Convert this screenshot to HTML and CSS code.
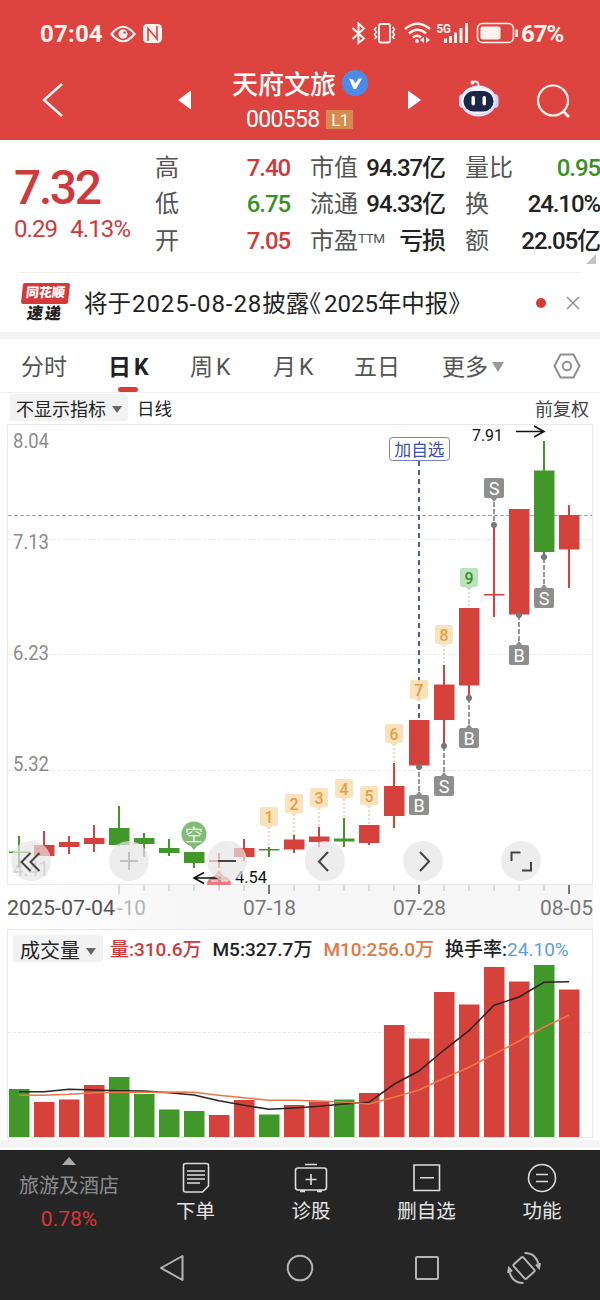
FILE: index.html
```html
<!DOCTYPE html>
<html lang="zh-CN">
<head>
  <meta charset="UTF-8">
  <meta name="viewport" content="width=device-width, initial-scale=1.0">
  <title>天府文旅 000558</title>
  <link rel="stylesheet" href="styles.css">
</head>
<body>
  <header class="header">
    <div class="status-bar">
      <span class="clock">07:04</span>
      <svg class="status-left" width="54" height="24" viewBox="0 0 54 24">
        <path d="M1.5 12Q13 -2.500 24.500 12Q13 26.500 1.500 12Z" fill="none" stroke="#fff3ee" stroke-width="2.200"/>
        <circle cx="13" cy="12" r="4.500" fill="#fff3ee"/>
        <circle cx="14.500" cy="10.500" r="1.200" fill="#dd4440"/>
        <rect x="33" y="2" width="19" height="19" rx="4.500" fill="#fff3ee"/>
        <path d="M38 19V6.500L47 17V4" fill="none" stroke="#dd4440" stroke-width="1.600"/>
      </svg>
      <svg class="status-right" width="170" height="24" viewBox="350 22 170 24">
        <g fill="none" stroke="#fff3ee" stroke-width="2">
          <path d="M352.500 28L364 38.500L358.500 43V23.500L364 28.500L352.500 39"/>
          <rect x="379" y="24" width="11" height="18.500" rx="2"/>
          <path d="M376.500 27l-2 2.500 2 2.500-2 2.500 2 2.500-2 2M392.500 27l2 2.500-2 2.500 2 2.500-2 2.500 2 2" stroke-width="1.600"/>
          <path d="M405 29Q417.500 18.500 430 29M409 33.500Q417.500 26 426 33.500M413 37.500Q417 34 421 37.500" stroke-width="2.400"/>
          <rect x="477.500" y="23.500" width="36" height="19" rx="5" stroke-width="1.600"/>
          <path d="M516.700 29.500v7.500" stroke-width="2.400"/>
        </g>
        <g fill="#fff3ee">
          <circle cx="417" cy="41" r="1.900"/>
          <path d="M420 40l4-3v6zM430 40l-4-3v6z"/>
          <path d="M444 38.500h3v4.500h-3zM449 36h3v7h-3zM454 32.500h3v10.500h-3zM459.500 28h3v15h-3zM465 23h3v20h-3z"/>
          <rect x="480.500" y="26.500" width="20" height="13" rx="2"/>
          <text x="436.500" y="33" class="net" textLength="14.500" lengthAdjust="spacingAndGlyphs">5G</text>
        </g>
      </svg>
      <span class="battery">67%</span>
    </div>
    <div class="title-bar">
      <svg class="back" width="24" height="38" viewBox="0 0 24 38"><path d="M21 3L3 19L21 35" fill="none" stroke="#fff" stroke-width="2.400"/></svg>
      <svg class="prev" width="14" height="20" viewBox="0 0 14 20"><path d="M0 10L13 0.500V19.500Z" fill="#fff"/></svg>
      <div class="stock">
        <div class="stock-name">天府文旅
          <svg width="26" height="26" viewBox="0 0 26 26"><circle cx="13" cy="13" r="13" fill="#4e8be8"/><path d="M7 8.500l4 1 2.500 4 3-5h3.500l-6 10.500h-2.500z" fill="#fff"/></svg>
        </div>
        <div class="stock-code">000558<span class="level">L1</span></div>
      </div>
      <svg class="next" width="14" height="20" viewBox="0 0 14 20"><path d="M13 10L0 0.500V19.500Z" fill="#fff"/></svg>
      <svg class="robot" width="42" height="40" viewBox="0 0 42 40">
        <path d="M14 3.500Q21 0 20.500 8" fill="none" stroke="#f6e3e8" stroke-width="2"/>
        <circle cx="14.500" cy="3.500" r="2" fill="#fff"/>
        <rect x="1" y="15" width="8" height="14" rx="4" fill="#cfd0fa"/>
        <rect x="32.500" y="15" width="8" height="14" rx="4" fill="#cfd0fa"/>
        <ellipse cx="20.500" cy="22" rx="18" ry="15.500" fill="#dcdcff"/>
        <ellipse cx="20" cy="21" rx="16.500" ry="14" fill="#f4f3ff"/>
        <rect x="5.500" y="12" width="30" height="20.500" rx="10" fill="#1c2748"/>
        <rect x="13.500" y="17" width="3.500" height="9.500" rx="1.700" fill="#fff"/>
        <rect x="24.500" y="17" width="3.500" height="9.500" rx="1.700" fill="#fff"/>
      </svg>
      <svg class="search" width="36" height="36" viewBox="0 0 36 36"><g fill="none" stroke="#fff3ee" stroke-width="2.200"><circle cx="17" cy="17.500" r="15"/><path d="M27 28l6 6" stroke-width="2.800"/></g></svg>
    </div>
  </header>

  <section class="quote">
    <div class="price red">
      <div class="last">7.32</div>
      <div class="change"><span>0.29</span><span>4.13%</span></div>
    </div>
    <dl class="col col-a">
      <dt>高</dt><dd class="red">7.40</dd>
      <dt>低</dt><dd class="green">6.75</dd>
      <dt>开</dt><dd class="red">7.05</dd>
    </dl>
    <dl class="col col-b">
      <dt>市值</dt><dd>94.37亿</dd>
      <dt>流通</dt><dd>94.33亿</dd>
      <dt>市盈<sup>TTM</sup></dt><dd>亏损</dd>
    </dl>
    <dl class="col col-c">
      <dt>量比</dt><dd class="green">0.95</dd>
      <dt>换</dt><dd>24.10%</dd>
      <dt>额</dt><dd>22.05亿</dd>
    </dl>
    <span class="corner"></span>
  </section>

  <section class="notice">
    <div class="notice-logo"><span class="logo-top">同花顺</span><span class="logo-bottom">速递</span></div>
    <p class="notice-text">将于<span class="date">2025-08-28</span>披露《<span class="year">2025</span>年中报》</p>
    <span class="dot"></span>
    <svg width="14" height="14" viewBox="0 0 14 14"><path d="M1 1l12 12M13 1L1 13" stroke="#8c8c8c" stroke-width="1.400"/></svg>
  </section>

  <nav class="tabs">
    <a>分时</a>
    <a class="active">日<span>K</span></a>
    <a>周<span>K</span></a>
    <a>月<span>K</span></a>
    <a>五日</a>
    <a class="more">更多<i class="caret"></i></a>
    <svg width="28" height="26" viewBox="0 0 28 26"><g fill="none" stroke="#8f8f8f" stroke-width="2"><path d="M7.500 1.500h13l6 11.500-6 11.500h-13L1.500 13z" stroke-linejoin="round"/><circle cx="14" cy="13" r="4.200"/></g></svg>
  </nav>

  <div class="chart-bar">
    <button class="picker">不显示指标<i class="caret dark"></i></button>
    <span class="period">日线</span>
    <span class="adjust">前复权</span>
  </div>

  <section class="chart">
    <svg id="kline" width="600" height="505" viewBox="0 424 600 505"></svg>
    <div class="controls">
      <button><svg width="40" height="40"><path d="M19.500 12l-9 9 9 9M28.500 12l-9 9 9 9"/></svg></button>
      <button class="faint"><svg width="40" height="40"><path d="M11 20h18M20 11v18"/></svg></button>
      <button><svg width="40" height="40"><path d="M11 20h18"/></svg></button>
      <button><svg width="40" height="40"><path d="M23 11l-9 9.500 9 9.500"/></svg></button>
      <button><svg width="40" height="40"><path d="M17 11l9 9.500-9 9.500"/></svg></button>
      <button><svg width="40" height="40"><path d="M10.500 20v-8.500h9M30 21v8.500h-9"/></svg></button>
    </div>
  </section>

  <section class="volume">
    <div class="volume-head">
      <button class="picker">成交量<i class="caret dark"></i></button>
      <span class="red">量:310.6万</span>
      <span>M5:327.7万</span>
      <span class="orange">M10:256.0万</span>
      <span>换手率:<b>24.10%</b></span>
    </div>
    <svg id="volume" width="600" height="174" viewBox="0 964 600 174"></svg>
    <div class="divider"></div>
  </section>

  <footer class="bottom">
    <div class="actions">
      <a class="sector"><i class="up"></i><span class="sector-name">旅游及酒店</span><span class="sector-rate">0.78%</span></a>
      <a>
        <svg width="32" height="32" viewBox="0 0 32 32"><path d="M5.500 1.500h21q2 0 2 2v20.500l-6 6h-17q-2 0-2-2v-24.500q0-2 2-2zM7 9h18M7 13h18M7 17h18M7 21h13"/></svg>
        下单
      </a>
      <a>
        <svg width="34" height="32" viewBox="0 0 34 32"><path d="M11 2.500h12M4 6h26q2.500 0 2.500 2.500v16.500q0 3-2.500 3h-26q-2.500 0-2.500-3v-16.500q0-2.500 2.500-2.500zM17 12v11M11.500 17.500h11M6 29.500h5M23 29.500h5"/></svg>
        诊股
      </a>
      <a>
        <svg width="32" height="32" viewBox="0 0 32 32"><path d="M3 3h25.500v25.500h-25.500zM9 15.700h14"/></svg>
        删自选
      </a>
      <a>
        <svg width="32" height="32" viewBox="0 0 32 32"><circle cx="16" cy="16" r="13.500"/><path d="M10 12.500h12M10 19.500h12"/></svg>
        功能
      </a>
    </div>
    <div class="system-nav">
      <svg width="26" height="28" viewBox="0 0 26 28"><path d="M23.500 2v24L2 14z" stroke-linejoin="round"/></svg>
      <svg width="28" height="28" viewBox="0 0 28 28"><circle cx="14" cy="14" r="12.300"/></svg>
      <svg width="26" height="26" viewBox="0 0 26 26"><rect x="2" y="2" width="22" height="22" rx="1"/></svg>
      <svg width="34" height="34" viewBox="0 0 34 34">
        <rect x="10.500" y="7.500" width="13" height="19" rx="1.500" transform="rotate(-42 17 17)"/>
        <path d="M17.500 2Q30 2 32 16M29 13.500l3 3.500 1-5M16.500 32Q4 32 2 18M5 20.500l-3-3.500-1 5"/>
      </svg>
    </div>
  </footer>

  <script src="script.js"></script>
</body>
</html>
```

FILE: styles.css
```css
* {
  box-sizing: border-box;
}
body {
  margin: 0;
  width: 600px;
  height: 1300px;
  overflow: hidden;
  background: #fff;
  color: #222;
  font-family: Roboto, "Noto Sans CJK SC", sans-serif;
}
button {
  border: 0;
  padding: 0;
  font-family: inherit;
  color: inherit;
}
.red {
  color: #d0393b;
}
.green {
  color: #39901f;
}
.orange {
  color: #e37745;
}

/* Header */
.header {
  height: 140px;
  background: #dd4440;
  color: #fff;
}
.status-bar {
  height: 62px;
  padding: 6px 0 0 40px;
  display: flex;
  align-items: center;
  color: #fff3ee;
  font-size: 24px;
  font-weight: 700;
}
.clock {
  width: 70px;
  letter-spacing: 0.2px;
}
.status-right {
  margin-left: 186px;
}
.battery {
  margin-left: 1px;
  letter-spacing: -1px;
}
.net {
  font-size: 12.5px;
}
.title-bar {
  height: 78px;
  display: flex;
  align-items: center;
}
.back {
  margin: -3px 0 0 41px;
}
.prev {
  margin: -2px 0 0 113px;
}
.stock {
  width: 142px;
  margin: -1px 0 0 39px;
  flex-shrink: 0;
}
.stock-name {
  display: flex;
  align-items: center;
  gap: 6px;
  height: 38px;
  margin-left: 1px;
  font-size: 26px;
  font-weight: 500;
  white-space: nowrap;
}
.stock-code {
  display: flex;
  align-items: center;
  height: 36px;
  padding-left: 15px;
  font-size: 23px;
  letter-spacing: -0.7px;
}
.level {
  width: 27px;
  height: 19px;
  margin-left: 7px;
  background: #d68c50;
  font-size: 17px;
  line-height: 20px;
  text-align: center;
}
.next {
  margin: -2px 0 0 35px;
}
.robot {
  margin: -4px 0 0 36px;
}
.search {
  margin-left: 36px;
}

/* Quote */
.quote {
  position: relative;
  height: 132px;
  padding-top: 9px;
  display: flex;
}
.price {
  width: 155px;
  padding: 9px 0 0 14px;
}
.last {
  height: 58px;
  line-height: 60px;
  font-size: 48px;
  font-weight: 500;
  letter-spacing: -2.4px;
}
.change {
  display: flex;
  gap: 13px;
  font-size: 24px;
  line-height: 26px;
  letter-spacing: -0.9px;
}
.col {
  margin: 1px 0 0;
  display: grid;
  grid-template-columns: auto 1fr;
  grid-auto-rows: 36.3px;
  align-content: start;
  align-items: center;
  font-size: 24px;
  line-height: 36px;
  white-space: nowrap;
}
.col dt {
  color: #555;
}
.col dd {
  margin: 0;
  text-align: right;
  font-weight: 500;
  letter-spacing: -1.1px;
}
.col sup {
  display: inline-block;
  width: 26px;
  margin-right: -26px;
  font-size: 13.5px;
  line-height: 14px;
  letter-spacing: -0.5px;
  vertical-align: 6px;
}
.col-a {
  width: 135px;
}
.col-b {
  width: 135px;
  margin-left: 20px;
}
.col-c {
  width: 135px;
  margin-left: 20px;
}
.corner {
  position: absolute;
  right: 4px;
  bottom: 8px;
  border-left: 10px solid transparent;
  border-bottom: 10px solid #c4c4c4;
}

/* Notice */
.notice {
  height: 60px;
  margin-left: 20px;
  width: 561px;
  border-top: 1px solid #eee;
  display: flex;
  align-items: center;
}
.notice-logo {
  width: 50px;
  display: flex;
  flex-direction: column;
  align-items: center;
  font-weight: 900;
}
.logo-top {
  width: 47px;
  height: 21px;
  border-radius: 2px;
  background: #d43a3a;
  color: #fff;
  font-size: 13px;
  line-height: 20px;
  text-align: center;
  transform: skewX(-6deg);
}
.logo-bottom {
  height: 19px;
  font-size: 16px;
  line-height: 20px;
  letter-spacing: 2px;
  transform: skewX(-8deg);
}
.notice-text {
  width: 464px;
  margin: -2px 0 0 14px;
  font-size: 23.5px;
  white-space: nowrap;
  font-feature-settings: "halt";
}
.date {
  margin-left: 1px;
  font-size: 24px;
  letter-spacing: 0.9px;
}
.year {
  margin-left: 3px;
  font-size: 24px;
}
.dot {
  width: 10px;
  height: 10px;
  margin: 0 20px 0 -12px;
  flex-shrink: 0;
  border-radius: 50%;
  background: #d83a37;
}
.notice svg {
  flex-shrink: 0;
}

/* Tabs */
.tabs {
  height: 61px;
  border-top: 7px solid #f4f4f4;
  border-bottom: 1px solid #eee;
  padding-left: 21px;
  display: grid;
  grid-template-columns: 87px 82px 83px 81px 88px 111px auto;
  align-items: center;
  font-size: 23px;
  color: #555;
}
.tabs a {
  position: relative;
  top: -1px;
  white-space: nowrap;
}
.tabs a span {
  margin-left: 3px;
}
.tabs .active {
  color: #222;
  font-weight: 700;
}
.active::after {
  content: "";
  position: absolute;
  left: 10px;
  bottom: -10px;
  width: 20px;
  height: 5px;
  border-radius: 3px;
  background: #d83c38;
}
.caret {
  display: inline-block;
  margin-left: 4px;
  border: 6.5px solid transparent;
  border-top: 10px solid #999;
  border-bottom: 0;
  vertical-align: 3px;
}
.caret.dark {
  margin-left: 6px;
  border-width: 7px 5px 0;
  border-top-color: #666;
}

/* Chart */
.chart-bar {
  height: 31px;
  display: flex;
  align-items: center;
  padding: 0 11px 2px 10px;
  font-size: 17.5px;
}
.picker {
  height: 27px;
  width: 118px;
  border-radius: 3px;
  background: #f2f2f2;
  font-size: 18px;
  white-space: nowrap;
}
.period {
  margin-left: 9px;
}
.adjust {
  margin-left: auto;
  font-size: 18px;
  color: #444;
}
.chart {
  position: relative;
  height: 505px;
}
.chart > svg,
.volume > svg {
  display: block;
}
.chart text {
  font-family: Roboto, "Noto Sans CJK SC", sans-serif;
}
.controls {
  position: absolute;
  left: 11px;
  top: 417px;
  display: flex;
  gap: 58px;
}
.controls button {
  width: 40px;
  height: 40px;
  border-radius: 50%;
  background: rgba(229, 229, 229, 0.7);
}
.controls svg {
  display: block;
  fill: none;
  stroke: #444;
  stroke-width: 2;
}
.controls .faint svg {
  stroke: #c0c0c0;
}

/* Volume */
.volume {
  height: 221px;
}
.volume-head {
  position: relative;
  height: 35px;
  padding-left: 13px;
  display: flex;
  align-items: center;
  font-size: 19px;
  white-space: nowrap;
}
.volume-head::before {
  content: "";
  position: absolute;
  left: 7px;
  right: 7px;
  top: 0;
  height: 36px;
  border: 1px solid #e8e8e8;
  border-bottom: 0;
}
.volume-head .picker {
  position: relative;
  width: 90px;
  margin: 4px 7px 0 0;
  font-size: 20px;
}
.volume-head span {
  margin: 2px 11px 0 0;
  font-weight: 500;
}
.volume-head b {
  font-weight: 400;
  color: #5b9fd6;
}
.divider {
  height: 7px;
  margin-top: 2px;
  background: #f4f4f4;
}

/* Bottom */
.bottom {
  height: 150px;
  background: #252525;
  color: #e6e6e6;
}
.bottom svg {
  fill: none;
  stroke: #ddd;
  stroke-width: 1.6;
}
.actions {
  height: 85px;
  display: grid;
  grid-template-columns: 138px 115px 116px 115px 116px;
  font-size: 19.5px;
}
.actions a {
  display: flex;
  flex-direction: column;
  align-items: center;
  padding-top: 12px;
  line-height: 35px;
}
.actions .sector {
  padding-top: 7px;
  font-size: 20px;
}
.up {
  border: 7px solid transparent;
  border-bottom: 8px solid #aaa;
  border-top: 0;
}
.sector-name {
  height: 38px;
  line-height: 42px;
  color: #8c8c8f;
}
.sector-rate {
  line-height: 33px;
  font-size: 21px;
  color: #df3434;
}
.system-nav {
  height: 66px;
  padding-left: 159px;
  display: grid;
  grid-template-columns: 127px 128px 93px 34px;
  align-items: center;
}
.system-nav svg {
  stroke: #b5b5b5;
  stroke-width: 2;
}
```

FILE: script.js
```js
const RED = '#d5423b';
const GREEN = '#41972a';
const STEP = 25;
const FIRST = 19;

// [color, high, low, body top, body bottom, volume top, m5, m10]
const days = [
  ['g', 836, 868, 851.5, 853, 1089, 1091.7, 1095.3],
  ['r', 831, 856, 845, 856, 1102, 1091.7, 1095.3],
  ['r', 836, 854, 842, 847, 1099.5, 1089.3, 1094.3],
  ['r', 825, 852, 838, 844, 1085, 1090, 1092.7],
  ['g', 806, 846, 828, 845, 1077, 1090.7, 1092.3],
  ['g', 833, 857, 838, 844, 1094, 1091, 1092.3],
  ['g', 839, 856, 848, 853, 1109.5, 1092.7, 1092],
  ['g', 852, 868, 852, 863, 1111, 1095, 1092.3],
  ['r', 853, 868, 860, 862, 1115, 1100.7, 1095.3],
  ['r', 839, 861, 848, 857, 1100, 1105.3, 1097.7],
  ['g', 847, 857, 849, 850.5, 1114.5, 1109.3, 1100.3],
  ['r', 835, 853, 839.5, 849.5, 1105, 1108, 1100.3],
  ['r', 827, 847, 836.5, 842, 1101.5, 1106.3, 1101],
  ['g', 818, 847, 838.5, 841.5, 1099.5, 1104, 1102],
  ['r', 825, 845, 825, 843, 1093, 1102.3, 1104],
  ['r', 763, 828, 786, 816, 1025, 1084.3, 1097.3],
  ['r', 720, 765, 720, 765.5, 1038.5, 1071, 1090],
  ['r', 665, 746, 684.5, 720, 992, 1050, 1078.3],
  ['r', 608, 698, 608, 685.5, 1004.5, 1030.7, 1067.3],
  ['r', 525, 617, 594, 595.5, 967, 1005.3, 1054.3],
  ['r', 509, 614, 509, 614.5, 981.5, 997, 1041],
  ['g', 441, 556, 470.5, 552, 965, 982.3, 1027],
  ['r', 505, 588, 515, 549.5, 989.5, 981.7, 1015.3]
];

const x = i => FIRST + i * STEP;
const line = (x1, y1, x2, y2, color, extra = '') =>
  `<path d="M${x1} ${y1}L${x2} ${y2}" fill="none" stroke="${color}" ${extra}/>`;
const label = (str, left, y, size, width, color, extra = '') =>
  `<text x="${left}" y="${y}" font-size="${size}" textLength="${width}" lengthAdjust="spacingAndGlyphs" fill="${color}" ${extra}>${str}</text>`;

function drawKline() {
  let out = '';
  // frame and date strip
  out += '<defs><linearGradient id="strip"><stop offset="0" stop-color="#fff"/><stop offset=".3" stop-color="#f7f7f7"/></linearGradient></defs>';
  out += '<rect x="7" y="885" width="586" height="44" fill="url(#strip)"/>';
  out += '<rect x="7.5" y="424.500" width="585" height="460" fill="none" stroke="#e8e8e8"/>';
  [539.5, 654.5, 770.5].forEach(y => {
    out += line(8, y, 592, y, '#ececec', 'stroke-dasharray="3 2"');
  });
  out += line(8, 515.5, 592, 515.5, '#c9a272', 'stroke-dasharray="4 2"');

  [['8.04', 448], ['7.13', 549], ['6.23', 660], ['5.32', 771], ['4.41', 876]].forEach(([t, y]) => {
    out += label(t, 13, y, 20, 36, t === '4.41' ? '#aaa' : '#8b8b8b');
  });

  // candles
  days.forEach(([c, high, low, top, bottom], i) => {
    const color = c === 'r' ? RED : GREEN;
    out += line(x(i), high, x(i), low, color, 'stroke-width="2"');
    out += `<rect x="${x(i) - 10}" y="${top}" width="20.5" height="${bottom - top}" fill="${color}"/>`;
  });

  // added to watchlist
  out += line(419, 461, 419, 720, '#3b4c9f', 'stroke-width="1.8" stroke-dasharray="5 4"');
  out += '<rect x="389.500" y="437.500" width="60" height="23" rx="3" fill="#fff" stroke="#7682c8"/>';
  out += label('加自选', 394.5, 455.500, 17, 50, '#4050a8');

  // numbered marks
  const marks = [[10, 817, 847], [11, 804, 835], [12, 798, 827], [13, 789, 818], [14, 796, 825], [15, 734, 763], [16, 690, 690], [17, 635, 665], [18, 578, 608]];
  marks.forEach(([i, y, end], n) => {
    const last = n === 8;
    if (end > y) out += line(x(i), y + 10, x(i), end, last ? '#a7cda3' : '#ddb877', 'stroke-dasharray="2 2"');
    out += `<path d="M${x(i) - 7} ${y - 10}h14q2 0 2 2v15q0 2-2 2h-3l-4 3-4-3h-3q-2 0-2-2v-15q0-2 2-2z" fill="${last ? '#b7dfb2' : '#f9dfb5'}" fill-opacity=".9"/>`;
    out += label(n + 1, x(i) - 4.5, y + 5.5, 17, 9, last ? '#2f9128' : '#e2a043', 'font-weight="500"');
  });

  // buy and sell tags
  const trades = [['B', 16, 805, 767], ['S', 17, 786, 746], ['B', 18, 738, 698], ['S', 19, 488, 525], ['B', 20, 655, 615], ['S', 21, 598, 557]];
  trades.forEach(([t, i, y, end]) => {
    const cx = x(i);
    const tip = end < y ? `M${cx - 4} ${y - 9}l4-5 4 5z` : `M${cx - 4} ${y + 9}l4 5 4-5z`;
    out += line(cx, y, cx, end, '#777', 'stroke-width="1.5" stroke-dasharray="5 2"');
    out += `<circle cx="${cx}" cy="${end}" r="3" fill="#777"/>`;
    out += `<rect x="${cx - 10}" y="${y - 10}" width="20" height="20" rx="2" fill="#8e8e8e"/><path d="${tip}" fill="#8e8e8e"/>`;
    out += `<text x="${cx}" y="${y + 6.5}" font-size="18" text-anchor="middle" fill="#fff">${t}</text>`;
  });

  // pins
  out += '<path d="M189 844l5 6 5-6z" fill="#83ba78"/><circle cx="194" cy="834" r="12.500" fill="#83ba78"/>';
  out += label('空', 185, 840.5, 17, 18, '#e8f7e4');
  out += '<path d="M207 885q0-7 7-9l5-6 5 6q7 2 7 9z" fill="#ec7a80"/><path d="M211 881h7m3 0h7" stroke="#fff"/>';

  // high and low
  out += label('7.91', 472, 441, 17, 31, '#111');
  out += '<path d="M516 431.500h27M534 426l10 5.500-10 5.500" fill="none" stroke="#111" stroke-width="1.600"/>';
  out += label('4.54', 235, 883, 17, 32, '#111');
  out += '<path d="M221 878h-26M204 872.500l-10 5.500 10 5.500" fill="none" stroke="#111" stroke-width="1.600"/>';

  // date axis
  for (let i = 4; i < days.length; i++) {
    const major = [10, 16, 22].includes(i);
    out += line(x(i), 885, x(i), major || i === 4 ? 894 : 891, major ? '#777' : '#bbb', major ? 'stroke-width="2"' : '');
  }
  out += label('2025-07-04', 7, 915, 19.5, 108, '#555');
  out += label('-10', 117, 915, 19.5, 29, '#b5b5b5');
  out += label('07-18', 243, 915, 19.5, 53, '#777');
  out += label('07-28', 393, 915, 19.5, 53, '#777');
  out += label('08-05', 540, 915, 19.5, 53, '#777');
  document.getElementById('kline').innerHTML = out;
}

function drawVolume() {
  let out = '<path d="M7.500 964V1137.500H592.500V964" fill="none" stroke="#e8e8e8"/>';
  out += line(8, 1032.5, 592, 1032.5, '#e8e8e8', 'stroke-dasharray="3 2"');
  days.forEach((d, i) => {
    out += `<rect x="${x(i) - 10}" y="${d[5]}" width="20.500" height="${1137 - d[5]}" fill="${d[0] === 'r' ? RED : GREEN}"/>`;
  });
  [[6, '#2b2422'], [7, '#ec7748']].forEach(([key, color]) => {
    const points = days.map((d, i) => `${x(i)},${d[key]}`).join(' ');
    out += `<polyline points="${points}" fill="none" stroke="${color}" stroke-width="1.6"/>`;
  });
  document.getElementById('volume').innerHTML = out;
}

drawKline();
drawVolume();
```
